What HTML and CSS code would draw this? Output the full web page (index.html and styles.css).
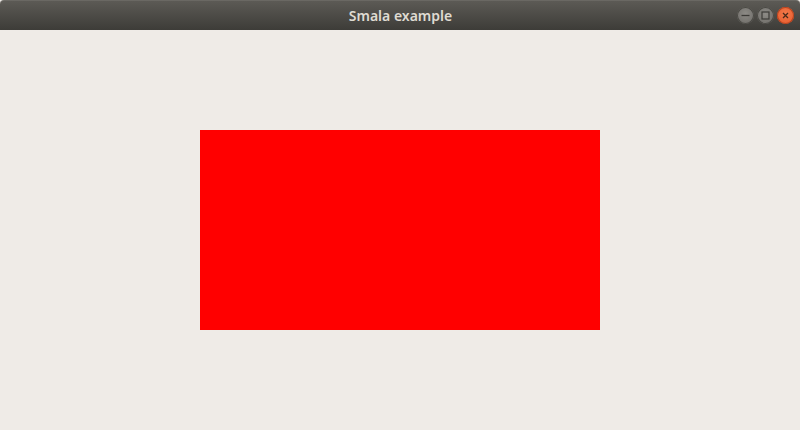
FILE: index.html
```html
<!DOCTYPE html>
<html>
<head>
<meta charset="utf-8">
<link rel="stylesheet" href="styles.css">
</head>
<body>
<div class="window">
  <div class="titlebar">
    <div class="title">Smala example</div>
    <div class="controls">
      <span class="btn min"><svg width="17" height="17" viewBox="0 0 17 17"><line x1="4.5" y1="8.5" x2="12.5" y2="8.5" stroke="#3c3b37" stroke-width="1.3"/></svg></span>
      <span class="btn max"><svg width="17" height="17" viewBox="0 0 17 17"><rect x="5" y="5" width="7" height="7" fill="none" stroke="#3c3b37" stroke-width="1.2"/></svg></span>
      <span class="btn close"><svg width="17" height="17" viewBox="0 0 17 17"><path d="M6 6 L11 11 M11 6 L6 11" stroke="#4a2a1a" stroke-width="1.3"/></svg></span>
    </div>
  </div>
  <div class="content">
    <div class="rect"></div>
  </div>
</div>
</body>
</html>
```
FILE: styles.css
```css
html, body {
  margin: 0;
  padding: 0;
  background: #efebe7;
}
.window {
  width: 800px;
  height: 430px;
  display: flex;
  flex-direction: column;
}
.titlebar {
  height: 30px;
  flex: 0 0 30px;
  box-sizing: border-box;
  background: linear-gradient(#5c5a55, #3d3c38);
  border-top: 1px solid #6a6863;
  border-radius: 4px 4px 0 0;
  position: relative;
  display: flex;
  align-items: center;
  justify-content: center;
}
.title {
  font-family: "Noto Sans", "DejaVu Sans", sans-serif;
  font-weight: 600;
  font-size: 14px;
  color: #dfdbd2;
  padding-left: 1px;
}
.controls {
  position: absolute;
  right: 6px;
  top: 6px;
  display: flex;
  gap: 3px;
}
.btn {
  width: 17px;
  height: 17px;
  border-radius: 50%;
  display: flex;
}
.min, .max {
  background: radial-gradient(circle at 50% 40%, #8d8b86, #6a6864);
  box-shadow: inset 0 0 0 1px #4a4944;
}
.close {
  background: radial-gradient(circle at 50% 40%, #f47a4a, #e4572a);
  box-shadow: inset 0 0 0 1px #b5431f;
}
.content {
  flex: 1;
  display: flex;
  align-items: center;
  justify-content: center;
}
.rect {
  width: 400px;
  height: 200px;
  background: #ff0000;
}
```
